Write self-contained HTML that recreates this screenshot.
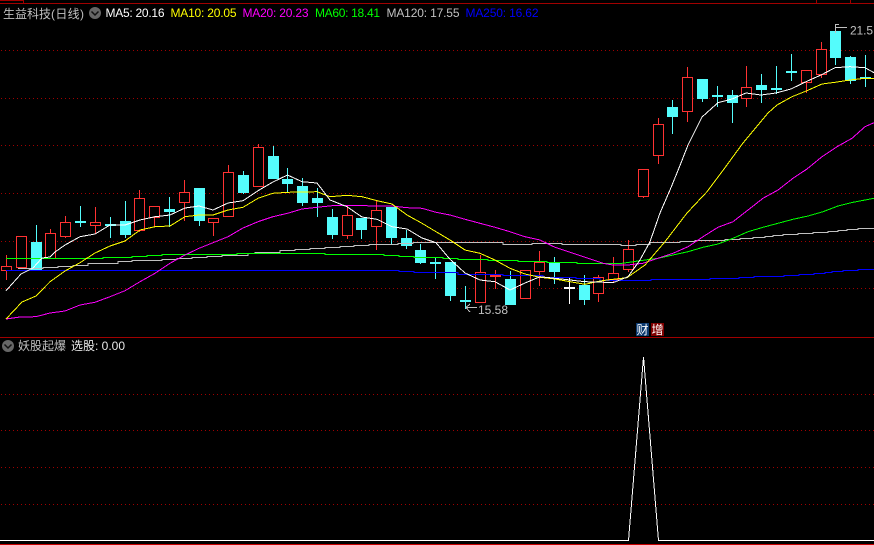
<!DOCTYPE html>
<html><head><meta charset="utf-8"><style>
html,body{margin:0;padding:0;background:#000;width:874px;height:545px;overflow:hidden}
svg{position:absolute;left:0;top:0;display:block}
text{font-family:"Liberation Sans","WenQuanYi Zen Hei","Noto Sans CJK SC",sans-serif;font-size:12px}
</style></head><body>
<svg width="874" height="545" viewBox="0 0 874 545" xmlns="http://www.w3.org/2000/svg">
<g shape-rendering="crispEdges" fill="none">
<path d="M0 3.5H874M0 337.5H874" stroke="#a00000"/>
<path d="M0 .5H23.5V3M816.5 0V3M850.5 0V3" stroke="#a00000"/>
<path d="M0 50.5H874M0 98.5H874M0 145.5H874M0 193.5H874M0 241.5H874M0 288.5H874M0 394.5H874M0 430.5H874M0 467.5H874M0 504.5H874" stroke="#a00000" stroke-dasharray="1 3" stroke-dashoffset="3"/>
<path d="M0 544.5H874" stroke="#c80000"/>
<!-- cyan wicks -->
<path stroke="#54fcfc" d="M36.5 225V270M80.5 206V227M110.5 217V238M125.5 201V238M169.5 197V227M199.5 188V226M243.5 171V194M273.5 146V179M287.5 168V192M302.5 178V206M317.5 188V217M332.5 209V239M361.5 218V239M391.5 207V244M406.5 230V249M420.5 244V264M435.5 258V279M450.5 262V301M465.5 286V309M510.5 271V305M554.5 257V284M584.5 275V305M672.5 100V134M702.5 79V102M717.5 86V107M732.5 90V123M761.5 74V103M776.5 66V94M791.5 54V81M835.5 26V65M850.5 56V84M865.5 55V87"/>
<path stroke="#fff" d="M569.5 278V304"/>
<!-- cyan bodies -->
<path fill="#54fcfc" d="M31 242h11v28h-11zM75 221h11v2h-11zM105 224h11v2h-11zM120 221h11v14h-11zM164 209h11v3h-11zM194 188h11v33h-11zM238 175h11v18h-11zM268 156h11v23h-11zM282 179h11v5h-11zM297 186h11v17h-11zM312 198h11v5h-11zM327 217h11v18h-11zM356 218h11v12h-11zM386 207h11v31h-11zM401 238h11v8h-11zM415 250h11v13h-11zM430 262h11v2h-11zM445 262h11v34h-11zM460 300h11v2h-11zM505 279h11v26h-11zM549 263h11v9h-11zM579 285h11v15h-11zM667 107h11v10h-11zM697 79h11v20h-11zM712 95h11v2h-11zM727 95h11v8h-11zM756 85h11v5h-11zM771 88h11v2h-11zM786 71h11v2h-11zM830 31h11v27h-11zM845 57h11v24h-11zM860 77h11v2h-11z"/>
<path fill="#fff" d="M564 287h11v2h-11z"/>
<!-- red wicks -->
<path stroke="#ff3232" d="M6.500 255V280M50.500 229V259M65.500 216V238M95.500 207V234M139.500 190V232M154.500 206V227M184.500 180V221M213.500 218V236M228.500 165V216M258.500 144V186M347.500 206V239M376.500 200V250M480.500 255V302M495.500 270V289M539.500 251V286M598.500 275V302M613.500 257V283M628.500 240V272M643.500 169V198M658.500 118V164M687.500 67V122M746.500 66V107M806.500 70V93M821.500 42V78"/>
<!-- red bodies -->
<path fill="#000" stroke="#ff3232" d="M1.500 266.500h10v4h-10zM16.500 236.500h10v31h-10zM45.500 233.500h10v25h-10zM60.500 222.500h10v14h-10zM90.500 222.500h10v3h-10zM134.500 198.500h10v32h-10zM149.500 206.500h10v11h-10zM179.500 192.500h10v10h-10zM208.500 218.500h10v4h-10zM223.500 172.500h10v44h-10zM253.500 147.500h10v39h-10zM342.500 215.500h10v20h-10zM371.500 210.500h10v16h-10zM475.500 272.500h10v30h-10zM520.500 270.500h10v28h-10zM534.500 262.500h10v9h-10zM593.500 277.500h10v16h-10zM608.500 273.500h10v6h-10zM623.500 249.500h10v20h-10zM638.500 169.500h10v27h-10zM653.500 124.500h10v31h-10zM682.500 77.500h10v34h-10zM741.500 87.500h10v11h-10zM801.500 70.500h10v12h-10zM816.500 49.500h10v25h-10z"/>
<path fill="#ff3232" d="M490 275h11v2h-11z"/>
<!-- MA250 blue -->
<path stroke="#0000ff" d="M6 270.500H399V271.500H414V272.500H458V274.500H503V275.500H543V277.500H576V278.500H600V280.500H651V279.500H710V278.500H739V277.500H754V276.500H784V275.500H799V274.500H814V273.500H825V272.500H832V271.500H843V270.500H858V269.500H874"/>
<!-- MA120 gray -->
<path stroke="#c0c0c0" d="M18 268.500H43V267.500H58V266.500H73V265.500H88V263.500H118V261.500H132V260.500H162V259.500H177V258.500H192V257.500H207V256.500H222V255.500H248V253.500H255V252.500H280V250.500H295V249.500H310V248.500H325V247.500H340V246.500H354V245.500H369V244.500H398V243.500H413V242.500H503V244.500H532V243.500H562V244.500H621V245.500H636V244.500H650V242.500H680V241.500H695V240.500H725V239.500H740V238.500H753V237.500H765V236.500H773V235.500H783V234.500H798V233.500H813V232.500H828V231.500H838V230.500H847V229.500H858V228.500H874"/>
<!-- MA60 green -->
<path stroke="#00ff00" d="M6 258.500H103V257.500H132V256.500H147V255.500H162V254.500H237V253.500H325V254.500H384V255.500H399V256.500H414V257.500H443V258.500H458V259.500H488V260.500H518V261.500H547V262.500H577V263.500H621L640 260.700 658 258.300 673 255 688 251.700 703 247.300 718 244 733 238.300 748 231.700 763 227.300 778 223.300 793 219.300 808 216 823 211.700 838 206 853 202.300 874 198.300"/>
<!-- MA20 magenta -->
<polyline stroke="#ff00ff" points="6,319 20,317 36,316.700 50,313 65,311 80,305 95,302.300 110,296.700 125,290.700 140,281.700 155,273.300 170,263.300 185,255 199,248.300 213,242.700 228,236.700 243,228 258,221.700 273,216.700 287.500,213.300 302,209 317,207.300 332,205.700 362,205.700 392,206 407,207.700 422,208.300 436,212.300 450,215 465,219.300 480,223.300 495,227.300 510,231.700 525,236.700 540,240 555,247.300 570,252.300 585,257.300 603,263.300 613,265 628,265 643,263.300 658,258.300 673,253.300 688,246.700 703,236.700 718,227.300 733,221.700 748,210 763,198.300 778,190 793,178.300 807,169 822,156.700 837,146.700 852,138.300 865,126.700 874,122.700"/>
<!-- MA10 yellow -->
<polyline stroke="#ffff00" points="6,319 22,302 36,296 50,281.700 65,271 80,262.700 95,253 110,246 125,241 140,230 155,226.700 170,226 185,216.700 199,215 213,215 228,210 243,207.300 258,198.300 273,193.300 287.500,192.300 302,192 317,191.700 330,196.700 347,195.300 362,196.700 377,200.700 392,204 407,215 422,223.300 436,231.700 450,240 465,250 480,253.300 495,260 510,268.300 525,274 540,277.300 555,279 570,281.700 585,284.300 600,281 613,279.300 627,277.700 645,265 665,241.700 687,213 707,191.700 724,169 743,143 768,113 777,105 792,96.700 807,90.700 822,84 835,82.300 850,80 865,78.300 874,78.300"/>
<!-- MA5 white -->
<polyline stroke="#ffffff" points="6,290.700 21,274 33,268 42,258 50,257 55,252 65,245 80,236.700 95,234 110,225 125,225 140,220 155,216.700 170,215 185,208 199,206 213,210 228,203 243,200.700 258,190.700 273,182 287.500,175 302,181.700 317,183 330,200 347,206.700 362,217 377,219.300 392,226.700 407,229 422,238 436,242.700 450,259.300 465,273 480,280 495,281.700 510,290 525,283 540,276.700 555,278.300 570,280 585,281.700 598,282 613,282.700 628,276.700 640,260 650,241.700 660,213 670,190 679,168 688,145 702,117 718,102.700 732,99 746,93 761,95 776,93 791,89 806,81.700 821,75 835,67.700 850,66.700 865,67.700 874,72.700"/>
<!-- indicator -->
<path stroke="#ffffff" d="M0 540.500H628.500L643.500 357 658.500 540.500H874"/>
<!-- price arrows -->
<path stroke="#c0c0c0" d="M835.500 24V33M835.500 24.500H839M836 27.500H847M466 307.500H477M466 307.500L470 304M466 307.500L470 312"/>
<!-- tag boxes -->
<rect x="636" y="323" width="13" height="13" fill="#0c3a70"/>
<rect x="651" y="323" width="13" height="13" fill="#800000"/>
</g>
<!-- collapse icons -->
<circle cx="95" cy="13" r="6" fill="#666"/>
<path d="M91.500 11.500L95 15 98.500 11.500" fill="none" stroke="#111" stroke-width="1.500"/>
<circle cx="8" cy="346" r="6" fill="#666"/>
<path d="M4.500 344.500L8 348 11.500 344.500" fill="none" stroke="#111" stroke-width="1.500"/>
<!-- text -->
<text x="3" y="18" fill="#c0c0c0">生益科技</text>
<text x="51" y="18" fill="#c0c0c0" textLength="33">(日线)</text>
<text x="105.500" y="17" fill="#fff" textLength="59">MA5: 20.16</text>
<text x="170.500" y="17" fill="#ffff00" textLength="66">MA10: 20.05</text>
<text x="242.500" y="17" fill="#ff00ff" textLength="66">MA20: 20.23</text>
<text x="315" y="17" fill="#00ff00" textLength="65">MA60: 18.41</text>
<text x="386.500" y="17" fill="#c0c0c0" textLength="73">MA120: 17.55</text>
<text x="465.500" y="17" fill="#0000ff" textLength="73">MA250: 16.62</text>
<text x="850" y="34.500" fill="#c0c0c0" textLength="23">21.5</text>
<text x="478" y="314" fill="#c0c0c0" textLength="30">15.58</text>
<text x="636.500" y="334" fill="#fff">财</text>
<text x="651.500" y="334" fill="#fff">增</text>
<text x="18" y="350" fill="#c0c0c0">妖股起爆</text>
<text x="71" y="350" fill="#e8e8e8">选股</text>
<text x="95" y="350" fill="#e8e8e8" textLength="30">: 0.00</text>
</svg>
</body></html>
